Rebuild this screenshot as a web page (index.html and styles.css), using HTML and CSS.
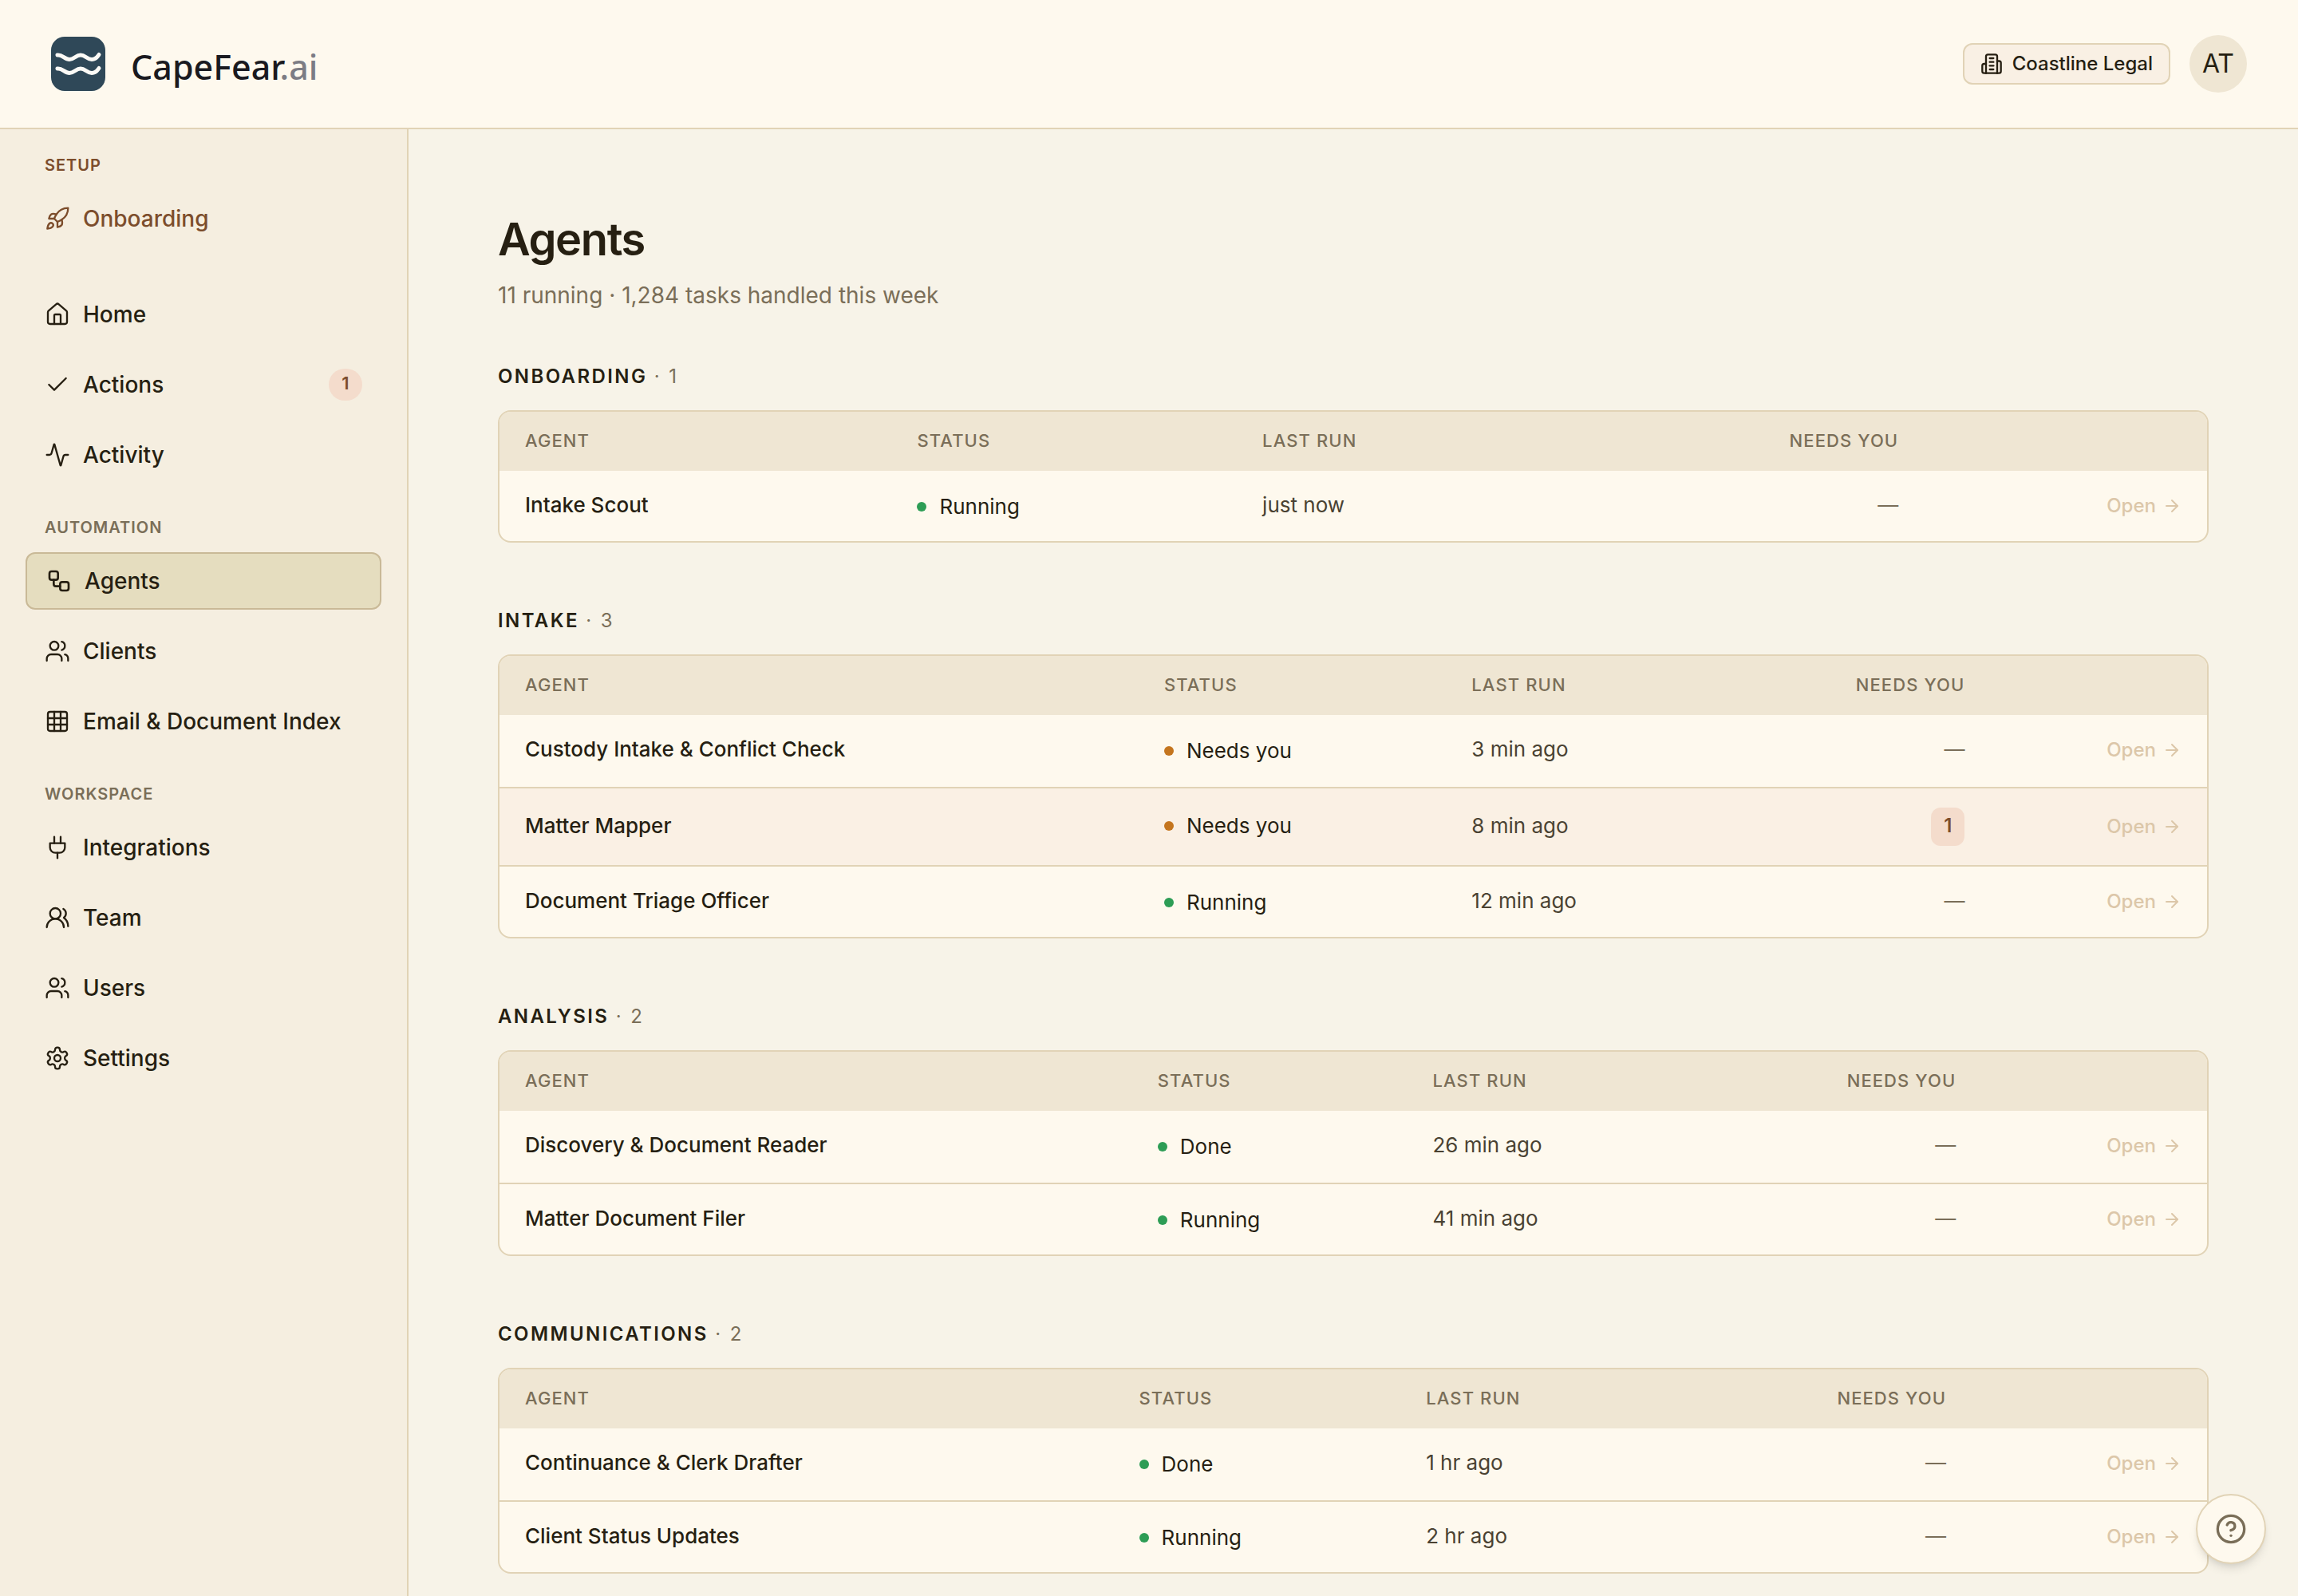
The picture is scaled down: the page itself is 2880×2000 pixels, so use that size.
FILE: index.html
```html
<!DOCTYPE html>
<html lang="en">
<head>
<meta charset="utf-8">
<title>Agents - CapeFear.ai</title>
<meta name="viewport" content="width=device-width, initial-scale=1">
<link rel="stylesheet" href="styles.css">
</head>
<body>
<svg class="sprite" aria-hidden="true">
  <symbol id="rocket" viewBox="0 0 24 24"><path d="M4.5 16.5c-1.5 1.26-2 5-2 5s3.74-.5 5-2c.71-.84.7-2.13-.09-2.91a2.18 2.18 0 0 0-2.91-.09z"/><path d="m12 15-3-3a22 22 0 0 1 2-3.95A12.88 12.88 0 0 1 22 2c0 2.72-.78 7.5-6 11a22.35 22.35 0 0 1-4 2z"/><path d="M9 12H4s.55-3.03 2-4c1.62-1.08 5 0 5 0"/><path d="M12 15v5s3.03-.55 4-2c1.08-1.62 0-5 0-5"/></symbol>
  <symbol id="house" viewBox="0 0 24 24"><path d="M15 21v-8a1 1 0 0 0-1-1h-4a1 1 0 0 0-1 1v8"/><path d="M3 10a2 2 0 0 1 .709-1.528l7-5.999a2 2 0 0 1 2.582 0l7 5.999A2 2 0 0 1 21 10v9a2 2 0 0 1-2 2H5a2 2 0 0 1-2-2z"/></symbol>
  <symbol id="check" viewBox="0 0 24 24"><path d="M20 6 9 17l-5-5"/></symbol>
  <symbol id="activity" viewBox="0 0 24 24"><path d="M22 12h-2.48a2 2 0 0 0-1.93 1.46l-2.35 8.36a.25.25 0 0 1-.48 0L9.24 2.18a.25.25 0 0 0-.48 0l-2.35 8.36A2 2 0 0 1 4.49 12H2"/></symbol>
  <symbol id="workflow" viewBox="0 0 24 24"><rect width="8" height="8" x="3" y="3" rx="2"/><path d="M7 11v4a2 2 0 0 0 2 2h4"/><rect width="8" height="8" x="13" y="13" rx="2"/></symbol>
  <symbol id="users" viewBox="0 0 24 24"><path d="M16 21v-2a4 4 0 0 0-4-4H6a4 4 0 0 0-4 4v2"/><circle cx="9" cy="7" r="4"/><path d="M22 21v-2a4 4 0 0 0-3-3.87"/><path d="M16 3.13a4 4 0 0 1 0 7.75"/></symbol>
  <symbol id="grid" viewBox="0 0 24 24"><rect width="18" height="18" x="3" y="3" rx="2"/><path d="M3 9h18"/><path d="M3 15h18"/><path d="M9 3v18"/><path d="M15 3v18"/></symbol>
  <symbol id="plug" viewBox="0 0 24 24"><path d="M12 22v-5"/><path d="M9 8V2"/><path d="M15 8V2"/><path d="M19 8v4a5 5 0 0 1-5 5h-4a5 5 0 0 1-5-5V8Z"/></symbol>
  <symbol id="team" viewBox="0 0 24 24"><path d="M18 21a8 8 0 0 0-16 0"/><circle cx="10" cy="8" r="5"/><path d="M22 20c0-3.37-2-6.5-4-8a5 5 0 0 0-.45-8.3"/></symbol>
  <symbol id="settings" viewBox="0 0 24 24"><path d="M12.22 2h-.44a2 2 0 0 0-2 2v.18a2 2 0 0 1-1 1.73l-.43.25a2 2 0 0 1-2 0l-.15-.08a2 2 0 0 0-2.73.73l-.22.38a2 2 0 0 0 .73 2.73l.15.1a2 2 0 0 1 1 1.72v.51a2 2 0 0 1-1 1.74l-.15.09a2 2 0 0 0-.73 2.73l.22.38a2 2 0 0 0 2.73.73l.15-.08a2 2 0 0 1 2 0l.43.25a2 2 0 0 1 1 1.73V20a2 2 0 0 0 2 2h.44a2 2 0 0 0 2-2v-.18a2 2 0 0 1 1-1.73l.43-.25a2 2 0 0 1 2 0l.15.08a2 2 0 0 0 2.73-.73l.22-.39a2 2 0 0 0-.73-2.73l-.15-.08a2 2 0 0 1-1-1.74v-.5a2 2 0 0 1 1-1.74l.15-.09a2 2 0 0 0 .73-2.73l-.22-.38a2 2 0 0 0-2.73-.73l-.15.08a2 2 0 0 1-2 0l-.43-.25a2 2 0 0 1-1-1.73V4a2 2 0 0 0-2-2z"/><circle cx="12" cy="12" r="3"/></symbol>
  <symbol id="building" viewBox="0 0 24 24"><path d="M6 22V4a2 2 0 0 1 2-2h8a2 2 0 0 1 2 2v18Z"/><path d="M6 12H4a2 2 0 0 0-2 2v6a2 2 0 0 0 2 2h2"/><path d="M18 9h2a2 2 0 0 1 2 2v9a2 2 0 0 1-2 2h-2"/><path d="M10 6h4"/><path d="M10 10h4"/><path d="M10 14h4"/><path d="M10 18h4"/></symbol>
  <symbol id="arrow" viewBox="0 0 24 24"><path d="M5 12h14"/><path d="m12 5 7 7-7 7"/></symbol>
  <symbol id="help" viewBox="0 0 24 24"><circle cx="12" cy="12" r="10"/><path d="M9.09 9a3 3 0 0 1 5.83 1c0 2-3 3-3 3"/><path d="M12 17h.01"/></symbol>
</svg>

<header class="topbar">
  <a class="brand" href="#">
    <svg class="brand-mark" viewBox="0 0 68 68" aria-hidden="true">
      <rect width="68" height="68" rx="17" fill="#2f4858"/>
      <g fill="none" stroke="#fcfaf6" stroke-width="5" stroke-linecap="round">
        <path d="M8 23C14 22 17 28.500 23 28.500S31 23 37 23S45 28.500 51 28.500S58 25 60 22.500"/>
        <path d="M8 40C14 39 17 45.500 23 45.500S31 40 37 40S45 45.500 51 45.500S58 42 60 39.500"/>
      </g>
    </svg>
    <span class="brand-name">CapeFear<span class="brand-tld">.ai</span></span>
  </a>
  <div class="topbar-actions">
    <button class="org" type="button"><svg class="icon icon-org"><use href="#building"/></svg>Coastline Legal</button>
    <button class="avatar" type="button" aria-label="Account">AT</button>
  </div>
</header>

<div class="shell">
  <nav class="sidebar" aria-label="Main">
    <h2 class="nav-label nav-label-setup">Setup</h2>
    <a class="nav-item nav-item-setup" href="#"><svg class="icon"><use href="#rocket"/></svg>Onboarding</a>
    <a class="nav-item" href="#"><svg class="icon"><use href="#house"/></svg>Home</a>
    <a class="nav-item" href="#"><svg class="icon"><use href="#check"/></svg>Actions<span class="nav-badge">1</span></a>
    <a class="nav-item" href="#"><svg class="icon"><use href="#activity"/></svg>Activity</a>
    <h2 class="nav-label">Automation</h2>
    <a class="nav-item nav-item-active" href="#" aria-current="page"><svg class="icon"><use href="#workflow"/></svg>Agents</a>
    <a class="nav-item" href="#"><svg class="icon"><use href="#users"/></svg>Clients</a>
    <a class="nav-item" href="#"><svg class="icon"><use href="#grid"/></svg>Email &amp; Document Index</a>
    <h2 class="nav-label">Workspace</h2>
    <a class="nav-item" href="#"><svg class="icon"><use href="#plug"/></svg>Integrations</a>
    <a class="nav-item" href="#"><svg class="icon"><use href="#team"/></svg>Team</a>
    <a class="nav-item" href="#"><svg class="icon"><use href="#users"/></svg>Users</a>
    <a class="nav-item" href="#"><svg class="icon"><use href="#settings"/></svg>Settings</a>
  </nav>

  <main class="content">
    <h1 class="title">Agents</h1>
    <p class="subtitle">11 running · 1,284 tasks handled this week</p>

    <div class="groups">
      <section>
        <h2 class="group-title">Onboarding <span class="group-count">· 1</span></h2>
        <div class="card">
          <table class="agents">
            <thead><tr><th>Agent</th><th>Status</th><th>Last run</th><th class="needs">Needs you</th><th></th></tr></thead>
            <tbody>
              <tr><td class="name">Intake Scout</td><td class="state"><span class="status">Running</span></td><td class="time">just now</td><td class="needs">—</td><td class="action"><a class="open" href="#">Open<svg class="icon icon-arrow"><use href="#arrow"/></svg></a></td></tr>
            </tbody>
          </table>
        </div>
      </section>

      <section>
        <h2 class="group-title">Intake <span class="group-count">· 3</span></h2>
        <div class="card">
          <table class="agents">
            <thead><tr><th>Agent</th><th>Status</th><th>Last run</th><th class="needs">Needs you</th><th></th></tr></thead>
            <tbody>
              <tr><td class="name">Custody Intake &amp; Conflict Check</td><td class="state"><span class="status status-waiting">Needs you</span></td><td class="time">3 min ago</td><td class="needs">—</td><td class="action"><a class="open" href="#">Open<svg class="icon icon-arrow"><use href="#arrow"/></svg></a></td></tr>
              <tr class="flagged"><td class="name">Matter Mapper</td><td class="state"><span class="status status-waiting">Needs you</span></td><td class="time">8 min ago</td><td class="needs"><span class="count">1</span></td><td class="action"><a class="open" href="#">Open<svg class="icon icon-arrow"><use href="#arrow"/></svg></a></td></tr>
              <tr><td class="name">Document Triage Officer</td><td class="state"><span class="status">Running</span></td><td class="time">12 min ago</td><td class="needs">—</td><td class="action"><a class="open" href="#">Open<svg class="icon icon-arrow"><use href="#arrow"/></svg></a></td></tr>
            </tbody>
          </table>
        </div>
      </section>

      <section>
        <h2 class="group-title">Analysis <span class="group-count">· 2</span></h2>
        <div class="card">
          <table class="agents">
            <thead><tr><th>Agent</th><th>Status</th><th>Last run</th><th class="needs">Needs you</th><th></th></tr></thead>
            <tbody>
              <tr><td class="name">Discovery &amp; Document Reader</td><td class="state"><span class="status">Done</span></td><td class="time">26 min ago</td><td class="needs">—</td><td class="action"><a class="open" href="#">Open<svg class="icon icon-arrow"><use href="#arrow"/></svg></a></td></tr>
              <tr><td class="name">Matter Document Filer</td><td class="state"><span class="status">Running</span></td><td class="time">41 min ago</td><td class="needs">—</td><td class="action"><a class="open" href="#">Open<svg class="icon icon-arrow"><use href="#arrow"/></svg></a></td></tr>
            </tbody>
          </table>
        </div>
      </section>

      <section>
        <h2 class="group-title">Communications <span class="group-count">· 2</span></h2>
        <div class="card">
          <table class="agents">
            <thead><tr><th>Agent</th><th>Status</th><th>Last run</th><th class="needs">Needs you</th><th></th></tr></thead>
            <tbody>
              <tr><td class="name">Continuance &amp; Clerk Drafter</td><td class="state"><span class="status">Done</span></td><td class="time">1 hr ago</td><td class="needs">—</td><td class="action"><a class="open" href="#">Open<svg class="icon icon-arrow"><use href="#arrow"/></svg></a></td></tr>
              <tr><td class="name">Client Status Updates</td><td class="state"><span class="status">Running</span></td><td class="time">2 hr ago</td><td class="needs">—</td><td class="action"><a class="open" href="#">Open<svg class="icon icon-arrow"><use href="#arrow"/></svg></a></td></tr>
            </tbody>
          </table>
        </div>
      </section>
    </div>
  </main>
</div>

<button class="help" type="button" aria-label="Help"><svg class="icon icon-help"><use href="#help"/></svg></button>
</body>
</html>
```
FILE: styles.css
```css
:root {
  --surface: #fef9ee;
  --page: #f7f3e8;
  --side: #f5eee0;
  --band: #efe6d3;
  --line: #e1d3b6;
  --ink: #261f12;
  --ink-soft: #4a4232;
  --muted: #7a6e58;
  --accent: #7c4d2c;
  --accent-soft: #f4dccc;
}

* { box-sizing: border-box; }

body {
  margin: 0;
  min-height: 100vh;
  display: flex;
  flex-direction: column;
  background: var(--page);
  color: var(--ink);
  font-family: Inter, "Liberation Sans", sans-serif;
  font-size: 28px;
  line-height: 40px;
}

a { color: inherit; text-decoration: none; }
button { font: inherit; color: inherit; cursor: pointer; }
h1, h2, p { margin: 0; }

.sprite { display: none; }

.icon {
  width: 32px;
  height: 32px;
  flex: none;
  fill: none;
  stroke: currentColor;
  stroke-width: 1.75;
  stroke-linecap: round;
  stroke-linejoin: round;
}
.icon-org { width: 28px; height: 28px; stroke-width: 2; }
.icon-arrow { width: 24px; height: 24px; stroke-width: 2; }
.icon-help { width: 40px; height: 40px; stroke-width: 2; }

/* Top bar */
.topbar {
  display: flex;
  align-items: center;
  justify-content: space-between;
  height: 162px;
  padding: 0 64px;
  background: var(--surface);
  border-bottom: 2px solid var(--line);
}
.brand { display: flex; align-items: center; gap: 32px; }
.brand-mark { width: 68px; height: 68px; }
.brand-name {
  padding-top: 8px;
  font-family: "Noto Sans", "Open Sans", sans-serif;
  font-size: 43px;
  font-weight: 500;
  line-height: 60px;
  color: #1a1a20;
}
.brand-tld { color: #7c7c84; }
.topbar-actions { display: flex; align-items: center; gap: 24px; }
.org {
  display: flex;
  align-items: center;
  gap: 12px;
  height: 52px;
  padding: 0 20px;
  background: #f9f0e4;
  border: 2px solid var(--line);
  border-radius: 12px;
  font-size: 24px;
  font-weight: 500;
}
.avatar {
  width: 72px;
  height: 72px;
  padding: 0;
  border: 0;
  border-radius: 50%;
  background: var(--band);
  font-size: 32px;
}

.shell { display: flex; flex: 1; }

/* Sidebar */
.sidebar {
  display: flex;
  flex-direction: column;
  gap: 16px;
  flex: none;
  width: 512px;
  padding: 30px 32px;
  background: var(--side);
  border-right: 2px solid var(--line);
}
.nav-label {
  padding: 24px 24px 0;
  font-size: 20px;
  font-weight: 600;
  line-height: 30px;
  letter-spacing: 1px;
  text-transform: uppercase;
  color: var(--muted);
}
.nav-label-setup { padding-top: 0; color: var(--accent); }
.nav-item {
  display: flex;
  align-items: center;
  gap: 16px;
  height: 72px;
  padding: 0 24px;
  border-radius: 12px;
  font-weight: 500;
}
.nav-item-setup { margin-bottom: 32px; color: var(--accent); }
.nav-item-active { background: #e5ddbf; border: 2px solid #c9b997; }
.nav-item-active .icon { stroke-width: 2; }
.nav-badge {
  min-width: 42px;
  margin-left: auto;
  padding-bottom: 4px;
  border-radius: 20px;
  background: var(--accent-soft);
  color: var(--accent);
  font-size: 22px;
  font-weight: 600;
  line-height: 36px;
  text-align: center;
}

/* Content */
.content { flex: 1; padding: 96px 112px 28px; }
.title {
  font-size: 56px;
  font-weight: 600;
  line-height: 84px;
  letter-spacing: -0.025em;
}
.subtitle { margin-top: 8px; color: var(--muted); }
.groups { display: grid; gap: 80px; margin-top: 64px; }
.group-title {
  margin-bottom: 24px;
  font-size: 24px;
  font-weight: 600;
  line-height: 36px;
  letter-spacing: 0.1em;
  text-transform: uppercase;
}
.group-count { font-weight: 400; color: var(--muted); }

.card {
  overflow: hidden;
  background: var(--surface);
  border: 2px solid var(--line);
  border-radius: 16px;
}
.agents { width: 100%; border-spacing: 0; font-size: 26px; line-height: 38px; }
.agents th {
  padding: 20px 32px 22px;
  background: var(--band);
  color: var(--muted);
  font-size: 22px;
  font-weight: 500;
  line-height: 32px;
  letter-spacing: 0.05em;
  text-align: left;
  text-transform: uppercase;
}
.agents td {
  padding: 24px 32px 28px;
  border-bottom: 2px solid var(--line);
}
.agents td.state { padding-top: 26px; padding-bottom: 26px; }
.agents td.action { padding-bottom: 26px; }
.agents tr:last-child td { padding-bottom: 26px; border-bottom: 0; }
.agents tr:last-child td.state,
.agents tr:last-child td.action { padding-bottom: 24px; }
.agents .flagged td,
.agents .flagged td.state { padding-top: 24px; padding-bottom: 26px; }
.agents .flagged td.needs,
.agents .flagged td.action { padding-bottom: 24px; }
.flagged { background: #faf0e4; }

.name { font-weight: 500; }
.status { display: flex; align-items: center; gap: 16px; }
.status::before {
  content: "";
  width: 12px;
  height: 12px;
  border-radius: 50%;
  background: #2d9d55;
}
.status-waiting::before { background: #c4751e; }
.time { color: var(--ink-soft); }
.agents .needs { text-align: right; }
td.needs { color: var(--muted); }
.count {
  display: inline-block;
  min-width: 42px;
  padding-bottom: 2px;
  border-radius: 12px;
  background: var(--accent-soft);
  color: var(--accent);
  font-size: 24px;
  font-weight: 600;
  line-height: 46px;
  text-align: center;
  vertical-align: top;
}
.action { text-align: right; }
.open {
  display: inline-flex;
  align-items: center;
  gap: 8px;
  color: #dcc7a9;
  font-size: 24px;
  font-weight: 500;
  line-height: 40px;
  vertical-align: top;
}

.help {
  position: fixed;
  right: 40px;
  bottom: 40px;
  display: grid;
  place-items: center;
  width: 88px;
  height: 88px;
  padding: 0;
  border: 2px solid var(--line);
  border-radius: 50%;
  background: var(--surface);
  color: var(--muted);
  box-shadow: 0 8px 12px -2px rgb(0 0 0 / 10%), 0 4px 8px -4px rgb(0 0 0 / 10%);
}
```
